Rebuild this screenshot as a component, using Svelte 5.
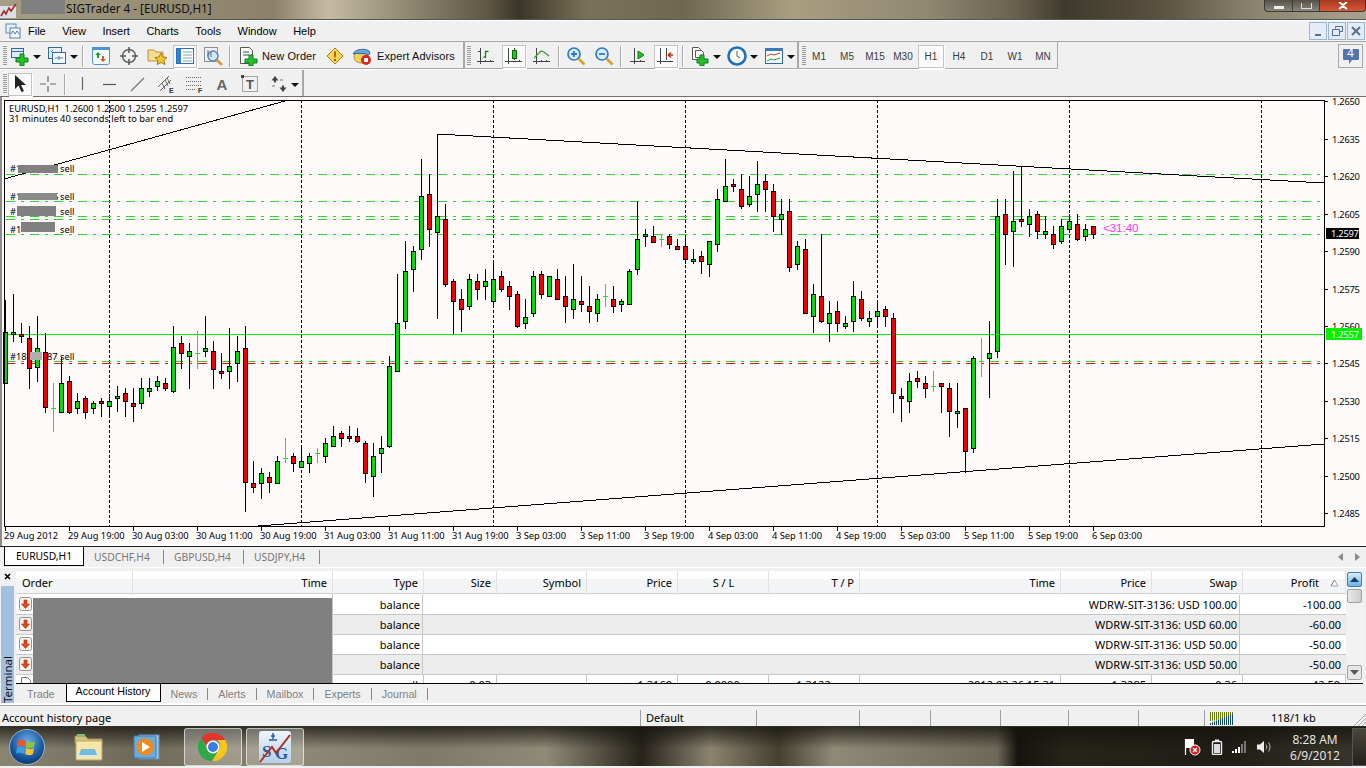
<script lang="ts">
  // [wick top, body top, body bottom, wick bottom, colour] in screen px; doji: [top, bottom, mid]
  const candles: any[] = [
    [300,332,383,383,'g'],[294,332,334,342,'g'],[323,334,336,343,'r'],[326,338,368,389,'r'],[316,348,367,382,'g'],
    [333,352,407,413,'r'],[383,432,408],[357,383,412,412,'g'],[376,381,412,414,'r'],[393,401,408,414,'g'],
    [396,398,412,419,'r'],[401,403,408,414,'g'],[398,401,403,417,'r'],[394,401,406,417,'g'],[386,396,398,412,'g'],
    [388,393,401,417,'r'],[388,403,406,422,'r'],[378,388,403,409,'g'],[378,388,391,397,'g'],[376,381,386,391,'g'],
    [378,383,388,391,'r'],[326,347,391,393,'g'],[336,343,353,369,'r'],[343,351,356,389,'g'],[331,369,353],
    [316,348,351,357,'g'],[341,351,369,389,'r'],[353,371,373,379,'r'],[328,366,371,389,'g'],[336,351,363,382,'g'],
    [326,348,482,512,'r'],[461,483,487,493,'r'],[468,473,483,499,'g'],[472,477,482,493,'r'],[456,461,483,483,'g'],
    [438,463,458],[453,456,463,472,'r'],[448,461,467,468,'g'],[453,456,463,473,'g'],[448,463,453],
    [438,443,456,463,'g'],[426,436,446,447,'g'],[431,433,438,447,'r'],[426,436,438,442,'r'],[428,436,441,443,'r'],
    [441,443,473,483,'r'],[443,456,476,497,'g'],[436,448,453,473,'g'],[356,366,446,448,'g'],[274,323,371,371,'g'],
    [241,271,321,329,'g'],[246,251,269,292,'g'],[159,196,249,260,'g'],[174,194,229,247,'r'],[134,216,232,319,'g'],
    [204,219,284,287,'r'],[279,281,301,334,'r'],[289,299,309,332,'r'],[274,279,306,310,'g'],[274,281,289,300,'r'],
    [269,281,286,300,'g'],[261,279,301,307,'g'],[271,276,289,292,'r'],[281,286,296,310,'r'],[291,294,326,328,'r'],
    [299,317,323,329,'g'],[271,276,313,317,'g'],[271,274,294,299,'r'],[276,276,296,296,'g'],[269,279,299,299,'r'],
    [276,296,306,323,'r'],[264,299,309,319,'g'],[276,301,304,312,'r'],[286,306,311,323,'r'],[294,299,313,322,'g'],
    [284,307,296],[286,299,306,313,'r'],[299,301,304,312,'g'],[269,271,304,304,'g'],[201,239,269,275,'g'],
    [229,234,236,247,'g'],[226,236,242,242,'r'],[234,247,239],[234,236,244,249,'r'],[239,246,249,250,'r'],
    [238,246,259,264,'r'],[249,259,261,264,'g'],[251,256,261,274,'r'],[241,241,264,277,'g'],[189,199,244,252,'g'],
    [159,186,201,201,'g'],[179,184,186,192,'r'],[174,189,206,209,'r'],[176,196,204,207,'g'],[161,184,194,212,'g'],
    [174,181,189,212,'r'],[184,191,216,232,'r'],[199,214,219,235,'g'],[199,211,267,272,'r'],[241,246,264,270,'g'],
    [239,249,313,313,'r'],[284,294,316,333,'g'],[234,296,321,323,'r'],[301,313,323,342,'g'],[301,311,323,332,'r'],
    [316,323,326,329,'g'],[281,296,321,332,'g'],[291,299,318,321,'r'],[311,318,321,327,'g'],[303,311,316,325,'g'],
    [306,309,316,327,'r'],[313,318,393,413,'r'],[388,396,398,422,'r'],[373,381,401,413,'g'],[371,378,381,388,'r'],
    [376,383,388,398,'r'],[371,392,386],[383,383,386,413,'r'],[383,388,411,437,'r'],[383,411,413,428,'g'],
    [408,408,451,473,'r'],[356,358,448,453,'g'],[338,377,361],[321,353,358,398,'g'],[199,216,351,358,'g'],
    [199,214,234,265,'r'],[171,221,231,267,'g'],[166,219,221,227,'r'],[209,216,224,237,'g'],[211,214,231,239,'r'],
    [216,231,234,239,'g'],[226,234,244,249,'r'],[219,226,241,244,'g'],[214,221,229,229,'g'],[214,224,239,241,'r'],
    [224,229,236,241,'g'],[226,226,234,239,'r']
  ];
  const vgrid = [109, 301, 493, 685, 877, 1069, 1261];
  const hlines = [[174,'#32cd32'],[201,'#32cd32'],[216,'#32cd32'],[219,'#32cd32'],[234,'#32cd32'],[361,'#32cd32'],[363,'#e01010']];
  const prices = [[101,'1.2650'],[139,'1.2635'],[176,'1.2620'],[214,'1.2605'],[251,'1.2590'],[289,'1.2575'],[326,'1.2560'],[363,'1.2545'],[401,'1.2530'],[438,'1.2515'],[476,'1.2500'],[513,'1.2485']];
  const times = ['29 Aug 2012','29 Aug 19:00','30 Aug 03:00','30 Aug 11:00','30 Aug 19:00','31 Aug 03:00','31 Aug 11:00','31 Aug 19:00','3 Sep 03:00','3 Sep 11:00','3 Sep 19:00','4 Sep 03:00','4 Sep 11:00','4 Sep 19:00','5 Sep 03:00','5 Sep 11:00','5 Sep 19:00','6 Sep 03:00'];
  const labels = [[10,172,'#1'],[10,200,'#10200075'],[10,215,'#1'],[10,233,'#1'],[10,360,'#18']];

  const menu = ['File','View','Insert','Charts','Tools','Window','Help'];
  const periods = ['M1','M5','M15','M30','H1','H4','D1','W1','MN'];
  const headers = [['Order','l'],['Time','r'],['Type','r'],['Size','r'],['Symbol','r'],['Price','r'],['S / L','c'],['T / P','r'],['Time','r'],['Price','r'],['Swap','r'],['Profit','p']];
  const balance = [['WDRW-SIT-3136: USD 100.00','-100.00'],['WDRW-SIT-3136: USD 60.00','-60.00'],['WDRW-SIT-3136: USD 50.00','-50.00'],['WDRW-SIT-3136: USD 50.00','-50.00']];
  const lastRow = ['', '', 'sell', '0.03', '', '1.3160', '0.0000', '1.3122', '2012.03.26 15:31', '1.3285', '0.36', '42.50'];
  const bottomTabs = ['News','Alerts','Mailbox','Experts','Journal'];
</script>

<div class="screen">
  <div class="title">
    <svg class="appicon" width="18" height="15" viewBox="0 0 18 15"><path d="M0 3h16v12H0z" fill="#d8dfe8"/><path d="M1 13l3-5 2 3 3-6 2 3 5-7" fill="none" stroke="#a8281c" stroke-width="1.6"/></svg>
    <div class="mask"></div>
    <span>SIGTrader 4 - [EURUSD,H1]</span>
    <div class="wctl">
      <div class="wbtn w1"><i class="wmin"></i></div>
      <div class="wbtn w2"><i class="wmax"></i></div>
      <div class="wbtn w3"><svg width="14" height="8" viewBox="0 0 14 8"><path d="M3 0l4 3 4-3M3 7l4-3 4 3" fill="none" stroke="#fff" stroke-width="2"/></svg></div>
    </div>
  </div>

  <div class="menu">
    <svg class="menuicon" width="16" height="16" viewBox="0 0 16 16"><rect x="1" y="1" width="10" height="9" fill="#e8f0fa" stroke="#5a8cc0"/><rect x="5" y="5" width="10" height="10" fill="#fff" stroke="#4a7cb4"/><path d="M6 11l2-3 2 3 2-3 2 3" fill="none" stroke="#3a78b8"/></svg>
    <div class="menuitems">
      {#each menu as m}<span>{m}</span>{/each}
    </div>
    <div class="mdi">
      <div class="mdibtn"><i class="g-min"></i></div>
      <div class="mdibtn"><svg width="11" height="11" viewBox="0 0 11 11"><path d="M3.500 2.500V.5h7v5h-3M.5 3.500h7v6h-7z" fill="none" stroke="#4f6d8c"/></svg></div>
      <div class="mdibtn"><svg width="10" height="10" viewBox="0 0 10 10"><path d="M1 1l8 8M9 1l-8 8" stroke="#5d7185" stroke-width="2"/></svg></div>
    </div>
  </div>

  <div class="tb t1">
    <div class="group g1">
      <i class="grip"></i>
      <div class="btn"><svg viewBox="0 0 20 20"><rect x="1.500" y="2.500" width="12" height="9" fill="#dfeaf7" stroke="#2f6aa8"/><path d="M1.500 5.500h12" stroke="#2f6aa8"/><path d="M10 8h4v4h4v4h-4v4h-4v-4H6v-4h4z" fill="#28c028" stroke="#0d7a18"/></svg></div>
      <i class="dd"></i>
      <div class="btn"><svg viewBox="0 0 20 20"><rect x="1.500" y="1.500" width="13" height="11" fill="#e4eefa" stroke="#2f6aa8"/><rect x="5.500" y="6.500" width="13" height="11" fill="#f6faff" stroke="#2f6aa8"/><path d="M4 6l2-2M8 12h8M12 10v4" stroke="#4a7cb4"/></svg></div>
      <i class="dd"></i>
      <i class="sep"></i>
      <div class="btn"><svg viewBox="0 0 20 20"><rect x="1.500" y="1.500" width="17" height="17" rx="2" fill="#f6fbff" stroke="#4f94d4"/><path d="M1 1h18v3H1z" fill="#4f94d4"/><path d="M7 6l3 3H8v3H6V9H4z" fill="#20a030"/><path d="M12 16l-3-3h2v-3h2v3h2z" fill="#e0552a"/></svg></div>
      <div class="btn"><svg viewBox="0 0 20 20"><circle cx="10" cy="10" r="6.500" fill="none" stroke="#666" stroke-width="1.500"/><path d="M10 1v6M10 13v6M1 10h6M13 10h6" stroke="#555" stroke-width="1.500"/></svg></div>
      <div class="btn"><svg viewBox="0 0 20 20"><path d="M1 4h6l2 2h7v9H1z" fill="#f6dc90" stroke="#b59536"/><path d="M14 7l2 4 4 .5-3 3 1 4-4-2-4 2 1-4-3-3 4-.5z" fill="#f2c430" stroke="#a07a18"/></svg></div>
      <div class="btn on"><svg viewBox="0 0 20 20"><rect x="1.500" y="2.500" width="17" height="15" fill="#fff" stroke="#2b70b8"/><rect x="2" y="3" width="4" height="14" fill="#2b84d8"/><path d="M8 6h9M8 9h9M8 12h9M8 15h9" stroke="#8aa2ba"/></svg></div>
      <div class="btn"><svg viewBox="0 0 20 20"><rect x="1.500" y="1.500" width="13" height="14" fill="#eef0f3" stroke="#8a8f98"/><circle cx="10" cy="10" r="5" fill="#d5e6f6" stroke="#5a86ad" stroke-width="1.500"/><path d="M14 14l5 5" stroke="#d89a2c" stroke-width="2.500"/><path d="M5 4v6M8 6v5" stroke="#5a6a7a"/></svg></div>
      <i class="sep"></i>
      <div class="btn wide order"><svg class="ico" viewBox="0 0 20 20"><path d="M2.500 1.500h9l3 3v13h-12z" fill="#fff" stroke="#555"/><path d="M5 6h6M5 9h6" stroke="#444"/><path d="M11 9h4v4h4v4h-4v3h-4v-3H7v-4h4z" fill="#28c028" stroke="#0d7a18"/></svg><span>New Order</span></div>
      <div class="btn"><svg viewBox="0 0 20 20"><path d="M10 2l8 8-8 8-8-8z" fill="#fbd655" stroke="#a88418" stroke-linejoin="round"/><path d="M9 5.500h2l-.3 6h-1.400z" fill="#a8560c"/><rect x="9" y="13" width="2" height="2" fill="#a8560c"/></svg></div>
      <div class="btn wide expert"><svg class="ico" viewBox="0 0 20 20"><ellipse cx="9" cy="11" rx="7" ry="6" fill="#f2d060" stroke="#b09020"/><path d="M1 8c2-5 12-6 16-3 1 1 1 3 0 4-5-2-11-2-16-1z" fill="#6fa8dc" stroke="#2c6aa0"/><circle cx="14" cy="14" r="5" fill="#d82820"/><rect x="12" y="12" width="4" height="4" fill="#fff"/></svg><span>Expert Advisors</span></div>
    </div>
    <div class="group g2">
      <i class="grip"></i>
      <div class="btn"><svg viewBox="0 0 20 20"><path d="M4.500 2v16M1 15.500h17M9.500 14v2M14.500 14v2M2 5.500h2" fill="none" stroke="#444"/><path d="M9.500 12V5.500h3M7.500 11h2" fill="none" stroke="#108a10" stroke-width="1.300"/></svg></div>
      <div class="btn on"><svg viewBox="0 0 20 20"><path d="M4.500 2v16M1 15.500h17M15.500 14v2" fill="none" stroke="#444"/><path d="M10.500 2v12" stroke="#1a5a1a"/><rect x="8.500" y="4.500" width="4" height="8" fill="#12d012" stroke="#0d6a0d"/></svg></div>
      <div class="btn"><svg viewBox="0 0 20 20"><path d="M4.500 2v16M1 15.500h17M9.500 14v2M14.500 14v2" fill="none" stroke="#444"/><path d="M2 12l7-7 3 1 5 4" fill="none" stroke="#3aa03a" stroke-width="1.300"/></svg></div>
      <i class="sep"></i>
      <div class="btn"><svg viewBox="0 0 20 20"><circle cx="8" cy="8" r="6" fill="#d8ebfb" stroke="#2d7cc4" stroke-width="1.700"/><path d="M5 8h6M8 5v6" stroke="#2d7cc4" stroke-width="1.800"/><path d="M12.500 12.500l6 6" stroke="#d8a030" stroke-width="2.600"/></svg></div>
      <div class="btn"><svg viewBox="0 0 20 20"><circle cx="8" cy="8" r="6" fill="#d8ebfb" stroke="#2d7cc4" stroke-width="1.700"/><path d="M5 8h6" stroke="#2d7cc4" stroke-width="1.800"/><path d="M12.500 12.500l6 6" stroke="#d8a030" stroke-width="2.600"/></svg></div>
      <i class="sep"></i>
      <div class="btn"><svg viewBox="0 0 20 20"><path d="M6.500 2v16M2 15.500h15M12.500 14v2" fill="none" stroke="#444"/><path d="M10 5v8l6-4z" fill="#1fc81f" stroke="#0d7a18"/></svg></div>
      <div class="btn on"><svg viewBox="0 0 20 20"><path d="M4.500 2v16M1 15.500h16M10.500 2v12" fill="none" stroke="#444"/><path d="M17 9h-5M12 9l3-2.500M12 9l3 2.500" fill="none" stroke="#c43010" stroke-width="1.600"/></svg></div>
      <i class="sep"></i>
      <div class="btn"><svg viewBox="0 0 20 20"><path d="M2.500 1.500h6l2 2v10h-8z" fill="#fff" stroke="#555"/><path d="M5.500 4.500h6l2 2v5h-8z" fill="#fff" stroke="#555"/><path d="M10 9h4v4h4v4h-4v3h-4v-3H7v-4h3z" fill="#28c028" stroke="#0d7a18"/></svg></div>
      <i class="dd"></i>
      <div class="btn"><svg viewBox="0 0 20 20"><circle cx="10" cy="10" r="8.500" fill="#fff" stroke="#1f6fc0" stroke-width="2.600"/><path d="M10 5v5l3 2" fill="none" stroke="#777" stroke-width="1.200"/></svg></div>
      <i class="dd"></i>
      <div class="btn"><svg viewBox="0 0 20 20"><rect x="1.500" y="2.500" width="17" height="15" fill="#f8fbff" stroke="#2f6aa8"/><rect x="1" y="2" width="18" height="3" fill="#3c78b8"/><path d="M3 10l4-2 3 1 6-2" fill="none" stroke="#c04020"/><path d="M3 15l4-2 3 1 6-2" fill="none" stroke="#2c9a2c"/></svg></div>
      <i class="dd"></i>
    </div>
    <div class="group g3">
      <i class="grip"></i>
      {#each periods as p}
        <div class="period" class:on={p === 'H1'}>{p}</div>
      {/each}
    </div>
    <div class="msg">
      <svg width="18" height="17" viewBox="0 0 18 17"><path d="M2 1h14a1 1 0 011 1v9a1 1 0 01-1 1h-6l-3 4v-4H2a1 1 0 01-1-1V2a1 1 0 011-1z" fill="#4f74b0"/></svg>
      <span>4</span>
    </div>
  </div>

  <div class="tb t2">
    <div class="group g4">
      <i class="grip"></i>
      <div class="btn on"><svg viewBox="0 0 20 20"><path d="M5 1v14l3.500-3.500 3 6.500 2.500-1-3-6h5z" fill="#222"/></svg></div>
      <div class="btn"><svg viewBox="0 0 20 20"><path d="M10 2v6M10 12v6M2 10h6M12 10h6" stroke="#666" stroke-width="1.200"/></svg></div>
      <i class="sep"></i>
      <div class="btn"><svg viewBox="0 0 20 20"><path d="M10.500 3v13" stroke="#666" stroke-width="1.200"/></svg></div>
      <div class="btn"><svg viewBox="0 0 20 20"><path d="M3 10.500h13" stroke="#555" stroke-width="1.200"/></svg></div>
      <div class="btn"><svg viewBox="0 0 20 20"><path d="M3 17L16 4" stroke="#777" stroke-width="1.200"/></svg></div>
      <div class="btn"><svg viewBox="0 0 20 20"><path d="M2 13L13 2M4 17L15 6M6 9l3 6M9 6l3 6M11 4l3 6" stroke="#666" fill="none"/><text x="13" y="19" class="ictext">E</text></svg></div>
      <div class="btn"><svg viewBox="0 0 20 20"><path d="M2 3.500h15M2 7.500h15M2 11.500h15M2 15.500h10" stroke="#666" stroke-dasharray="1 1"/><text x="14" y="19" class="ictext">F</text></svg></div>
      <div class="btn"><span class="a">A</span></div>
      <div class="btn"><svg viewBox="0 0 20 20"><rect x="2.500" y="2.500" width="15" height="15" fill="none" stroke="#555" stroke-dasharray="1 1"/><rect x="1" y="1" width="3" height="3" fill="#444"/><text x="10" y="15" class="ictext2">T</text></svg></div>
      <div class="btn"><svg viewBox="0 0 20 20"><path d="M7 2l3.500 4.500H8v2H6v-2H3.500zM15 18l-3.500-4.500H14v-2h2v2h2.500z" fill="#444"/><path d="M4 12h3M12 6h3" stroke="#777"/></svg></div>
      <i class="dd"></i>
    </div>
  </div>

  <svg class="chart" width="1366" height="449" viewBox="0 97 1366 449">
    <rect x="0" y="97" width="1366" height="449" fill="#fffafa"/>
    <rect x="0" y="97" width="2" height="449" fill="#8c8c8c"/>
    {#each vgrid as x}
      <path d="M{x + 0.5} 100V526" stroke="#000" stroke-dasharray="3 2"/>
    {/each}
    {#each hlines as h}
      <path d="M6 {h[0] + 0.5}H1324" stroke={h[1]} stroke-dasharray="9 6 3 6"/>
    {/each}
    <rect x="4" y="334" width="1320" height="1" fill="#00f000"/>
    {#each candles as c, i}
      {@const x = 5 + 8 * i}
      {#if c.length === 3}
        <rect {x} y={c[0]} width="1" height={c[1] - c[0]} fill="#22e022"/>
        <rect x={x - 2} y={c[2]} width="5" height="1" fill="#22e022"/>
      {:else}
        <rect {x} y={c[0]} width="1" height={c[3] - c[0]} fill="#000"/>
        <rect x={x - 1.500} y={c[1] + 0.5} width="4" height={c[2] - c[1]} fill={c[4] === 'g' ? '#00e000' : '#f00000'} stroke="#000"/>
      {/if}
    {/each}
    <path d="M4 179L285 101M437 134L1324 183M258 526L1324 444" stroke="#000" fill="none"/>
    <rect x="4" y="100" width="1320" height="1" fill="#000"/>
    <rect x="4" y="100" width="1" height="427" fill="#000"/>
    <rect x="4" y="526" width="1320" height="1" fill="#000"/>
    <rect x="1324" y="100" width="1" height="427" fill="#000"/>
    {#each prices as p}
      <rect x="1324" y={p[0]} width="4" height="1" fill="#000"/>
      <text x="1332" y={+p[0] + 4} class="tx pr">{p[1]}</text>
    {/each}
    {#each times as t, i}
      <rect x={5 + 64 * i} y="527" width="1" height="4" fill="#000"/>
      <text x={4 + 64 * i} y="539" class="tx">{t}</text>
    {/each}
    <text x="9" y="112" class="tx">EURUSD,H1  1.2600 1.2600 1.2595 1.2597</text>
    <text x="9" y="122" class="tx">31 minutes 40 seconds left to bar end</text>
    {#each labels as l}
      <text x={l[0]} y={l[1]} class="tx">{l[2]}</text>
    {/each}
    <text x="60" y="172" class="tx">sell</text>
    <text x="60" y="200" class="tx">sell</text>
    <text x="60" y="215" class="tx">sell</text>
    <text x="60" y="233" class="tx">sell</text>
    <text x="60" y="360" class="tx">sell</text>
    <text x="47" y="360" class="tx">87</text>
    <rect x="18" y="165" width="40" height="8" fill="#808080"/>
    <rect x="18" y="193" width="39" height="7" fill="#8a8a8a"/>
    <rect x="17" y="206" width="39" height="10" fill="#808080"/>
    <rect x="21" y="222" width="34" height="10" fill="#808080"/>
    <rect x="30" y="352" width="12" height="8" fill="#b0b0b0"/>
    <rect x="81" y="166" width="11" height="1" fill="#fff"/>
    <text x="1103" y="232" class="timer">&lt;31:40</text>
    <rect x="1326" y="228" width="33" height="11" fill="#000"/>
    <text x="1331" y="237" class="tx pr tagw">1.2597</text>
    <rect x="1326" y="328" width="36" height="12" fill="#00f000"/>
    <text x="1331" y="338" class="tx pr tagw">1.2557</text>
  </svg>

  <div class="tabs">
    <div class="tab active">EURUSD,H1</div>
    <div class="tab t80">USDCHF,H4</div>
    <div class="tab t80">GBPUSD,H4</div>
    <div class="tab t76">USDJPY,H4</div>
    <div class="arrows">
      <svg width="5" height="8" viewBox="0 0 5 8"><path d="M5 0v8L0 4z" fill="#8a8a8a"/></svg>
      <svg width="5" height="8" viewBox="0 0 5 8"><path d="M0 0v8l5-4z" fill="#8a8a8a"/></svg>
    </div>
  </div>

  <div class="terminal">
    <div class="rail">
      <svg width="7" height="7" viewBox="0 0 7 7"><path d="M1 1l5 5M6 1L1 6" stroke="#000" stroke-width="1.600"/></svg>
      <div class="railbar"><span>Terminal</span></div>
    </div>
    <div class="panel">
      <div class="tablewrap">
        <div class="table">
          <div class="thead">
            {#each headers as h}
              <div class="th {h[1]}">
                {h[0]}
                {#if h[1] === 'p'}<svg class="sort" width="9" height="8" viewBox="0 0 9 8"><path d="M4.500 1L8 7H1" fill="none" stroke="#aaa"/><path d="M4.500 1L1 7" stroke="#777"/></svg>{/if}
              </div>
            {/each}
          </div>
          <div class="tbody">
            {#each balance as b, i}
              <div class="tr" class:alt={i % 2 === 1}>
                <div class="td icon">
                  <svg width="14" height="14" viewBox="0 0 14 14"><rect x=".5" y=".5" width="12" height="13" rx="2" fill="#f7f3ef" stroke="#9a8f88"/><path d="M5 3h3v4h2.500L6.500 11.500 2.500 7H5z" fill="#e2481c" stroke="#a82c0c" stroke-width=".6"/></svg>
                </div>
                <div class="td"></div>
                <div class="td num">balance</div>
                <div class="td num">{b[0]}</div>
                <div class="td num last">{b[1]}</div>
              </div>
            {/each}
            <div class="tr full">
              <div class="td icon"><svg width="14" height="14" viewBox="0 0 14 14"><path d="M2.500 .5h6l3 3v10h-9z" fill="#fff" stroke="#777"/></svg></div>
              {#each lastRow.slice(1) as v, i}
                <div class="td num" class:ctr={i === 5 || i === 6}>{v}</div>
              {/each}
            </div>
          </div>
          <div class="redacted"></div>
        </div>
        <div class="scroll">
          <div class="sbtn up"><svg width="9" height="5" viewBox="0 0 9 5"><path d="M0 5l4.500-5L9 5z" fill="#123c66"/></svg></div>
          <div class="thumb"></div>
          <div class="sbtn down"><svg width="9" height="5" viewBox="0 0 9 5"><path d="M0 0l4.500 5L9 0z" fill="#555"/></svg></div>
        </div>
      </div>
      <div class="btabs">
        <div class="btab first">Trade</div>
        <div class="btab active">Account History</div>
        {#each bottomTabs as t}
          <div class="btab">{t}</div>
        {/each}
      </div>
    </div>
  </div>

  <div class="status">
    <div class="scell s0">Account history page</div>
    <div class="scell s1">Default</div>
    <div class="scell s2"></div>
    <div class="scell s3"></div>
    <div class="scell s4"></div>
    <div class="scell s5"></div>
    <div class="scell s6"></div>
    <div class="scell s7"></div>
    <div class="scell s8">
      <svg width="24" height="13" viewBox="0 0 24 13">
        {#each Array(12) as _, i}
          <rect x={i * 2} y="0" width="1" height={9 - i * 0.3} fill="#6a7a10"/>
          <rect x={i * 2} y={11 - i * 0.8} width="1" height={2 + i * 0.8} fill="#0f4a68"/>
        {/each}
      </svg>
      <span>118/1 kb</span>
    </div>
    <svg class="resize" width="13" height="13" viewBox="0 0 13 13"><path d="M13 1L1 13M13 5l-8 8M13 9l-4 4" stroke="#aaa"/></svg>
  </div>

  <div class="taskbar">
    <div class="orb">
      <svg width="36" height="36" viewBox="0 0 36 36">
        <defs><radialGradient id="orbg" cx=".5" cy=".35" r=".7"><stop offset="0" stop-color="#6fb0e8"/><stop offset=".6" stop-color="#1c5ea8"/><stop offset="1" stop-color="#0a2c58"/></radialGradient></defs>
        <circle cx="18" cy="18" r="17.500" fill="url(#orbg)" stroke="#9fb4c4"/>
        <path d="M9 12c3-2 5-1 8 0l-1 6c-3-1-5-2-8 0z" fill="#e8582c"/>
        <path d="M18 12c3 1 5 2 8 0l-1 6c-3 2-5 1-8 0z" fill="#8cc63e"/>
        <path d="M8 19c3-2 5-1 8 0l-1 6c-3-1-5-2-8 0z" fill="#3c9de0"/>
        <path d="M17 19c3 1 5 2 8 0l-1 6c-3 2-5 1-8 0z" fill="#f4c22c"/>
      </svg>
    </div>
    <div class="tskicon i1">
      <svg width="32" height="30" viewBox="0 0 32 30"><path d="M2 4h10l3 3h14v4H2z" fill="#d8c07a" stroke="#a89050"/><path d="M4 2h8v3H4z" fill="#7ac070"/><rect x="3" y="9" width="26" height="19" rx="1" fill="#f6e6a8" stroke="#b8a468"/><path d="M5 20h20v5H5z" fill="#d8e8f0"/><path d="M8 17h14l2 6H6z" fill="#58b0e0" opacity=".8"/></svg>
    </div>
    <div class="tskicon i2">
      <svg width="28" height="28" viewBox="0 0 28 28"><rect x="6" y="2" width="20" height="24" fill="#9cc4e4" stroke="#5c90bc"/><rect x="1" y="3" width="22" height="22" rx="1" fill="#6caad8" stroke="#3f7fb4"/><circle cx="12" cy="14" r="8.500" fill="#f08a1c"/><path d="M9 9l8 5-8 5z" fill="#fff"/></svg>
    </div>
    <div class="tskbtn b1">
      <svg width="30" height="30" viewBox="0 0 30 30"><path d="M15 1a14 14 0 0112.100 7H15a7 7 0 00-6.700 5L3.200 6A14 14 0 0115 1z" fill="#e0362c"/><path d="M27.100 8A14 14 0 0114 29l6-10a7 7 0 00-.5-11z" fill="#f7c818"/><path d="M14 29A14 14 0 013.200 6l6 10.500A7 7 0 0020 19z" fill="#2fa84a"/><circle cx="15" cy="15" r="6.500" fill="#fff"/><circle cx="15" cy="15" r="5" fill="#3b7de0"/></svg>
    </div>
    <div class="tskbtn b2">
      <div class="sig">
        <svg width="32" height="32" viewBox="0 0 32 32"><defs><linearGradient id="sigb" x1="0" y1="0" x2="0" y2="1"><stop offset="0" stop-color="#eef4fb"/><stop offset="1" stop-color="#b8cfe8"/></linearGradient></defs><rect width="32" height="32" rx="3" fill="url(#sigb)"/><path d="M14 2v6M12 5h4M10 9h8" stroke="#2a5aa0" stroke-width="1.500"/><text x="3" y="26" class="sigt">S</text><text x="16" y="28" class="sigt">G</text><path d="M1 31L13 16l4 6L31 4" fill="none" stroke="#a83428" stroke-width="2"/></svg>
      </div>
    </div>
    <div class="tray">
      <svg width="18" height="18" viewBox="0 0 18 18"><path d="M1.500 1v16" stroke="#fff" stroke-width="1.200"/><path d="M2 1h8v9H2z" fill="#fff"/><circle cx="11" cy="12" r="5" fill="#d81c1c" stroke="#fff"/><path d="M9 10l4 4M13 10l-4 4" stroke="#fff" stroke-width="1.300"/></svg>
      <svg width="12" height="16" viewBox="0 0 12 16"><rect x="1.500" y="2.500" width="9" height="13" rx="1" fill="none" stroke="#eee" stroke-width="1.400"/><rect x="4" y=".5" width="4" height="2" fill="#eee"/><rect x="3" y="5" width="6" height="9" fill="#ddd"/></svg>
      <svg width="16" height="12" viewBox="0 0 16 12"><rect x="0" y="10" width="2" height="2" fill="#fff"/><rect x="3" y="8" width="2" height="4" fill="#fff"/><rect x="6" y="6" width="2" height="6" fill="#fff"/><rect x="9" y="3" width="2" height="9" fill="#777"/><rect x="12" y="0" width="2" height="12" fill="#777"/></svg>
      <svg width="16" height="14" viewBox="0 0 16 14"><path d="M0 4.500h3L7 1v12L3 9.500H0z" fill="#eee"/><path d="M9 4.500c1 1.500 1 3.500 0 5M11.500 2.500c2 2.500 2 6.500 0 9" fill="none" stroke="#bbb"/></svg>
    </div>
    <div class="clock"><div>8:28 AM</div><div>6/9/2012</div></div>
    <div class="desk"></div>
  </div>
</div>

<style>
  :global(body) {
    margin: 0;
    background: #f0f0f0;
  }
  .screen {
    width: 1366px;
    height: 768px;
    overflow: hidden;
    font-family: "Noto Sans", "Open Sans", sans-serif;
    font-size: 11px;
    color: #000;
    display: flex;
    flex-direction: column;
  }
  i { display: block; }

  /* title bar */
  .title {
    height: 21px;
    box-sizing: border-box;
    display: flex;
    align-items: flex-start;
    background:
      linear-gradient(90deg, #a59d84 0, #8a8168 20%, #c4bba2 24%, #8f8770 30%, #5b543f 36%, #3a3527 38%, #7a7258 43%, #6f6850 50%, #a89f82 58%, #8f8770 68%, #6b6450 74%, #3f3a2c 78%, #59523f 85%, #8c8570 92%, #a8a290 100%);
    border-bottom: 1px solid #fff;
    box-shadow: inset 0 -1px 0 #555;
  }
  .appicon { margin-top: 3px; flex: none; }
  .mask { width: 44px; height: 14px; margin-left: 3px; background: #808080; flex: none; }
  .title span {
    margin-left: 1px;
    font-size: 11.700px;
    line-height: 16px;
    color: #101010;
  }
  .wctl { margin-left: auto; display: flex; height: 12px; }
  .wbtn {
    box-sizing: border-box;
    height: 12px;
    border: 1px solid #3c3a34;
    border-top: 0;
    display: flex;
    align-items: center;
    justify-content: center;
    background: linear-gradient(#55524a, #8a867a);
  }
  .w1 { width: 29px; border-radius: 0 0 0 4px; }
  .w2 { width: 27px; border-left: 0; }
  .w3 { width: 46px; border-left: 0; background: linear-gradient(#a83a20, #d85638); border-radius: 0 0 4px 0; }
  .wmin { width: 10px; height: 3px; background: #eee; margin-top: 3px; }
  .wmax { width: 9px; height: 5px; border: 1px solid #ddd; border-top: 0; }

  /* menu */
  .menu {
    height: 21px;
    box-sizing: border-box;
    display: flex;
    align-items: center;
    background: #f0f0f0;
    border-bottom: 1px solid #a8a8a8;
    position: relative;
  }
  .menuicon { margin-left: 5px; flex: none; }
  .menuitems { display: flex; gap: 16.500px; margin-left: 7px; font: 11px "Liberation Sans", sans-serif; }
  .mdi { margin-left: auto; display: flex; gap: 1px; margin-right: 1px; }
  .mdibtn {
    box-sizing: border-box;
    width: 18px;
    height: 18px;
    border: 1px solid #9db6d0;
    background: #e4edf7;
    display: flex;
    align-items: center;
    justify-content: center;
  }
  .g-min { width: 6px; height: 2px; background: #5d7185; margin-top: 7px; }

  /* toolbars */
  .tb { display: flex; background: #f0f0f0; box-sizing: border-box; }
  .t1 { height: 28px; }
  .t2 { height: 27px; border-bottom: 1px solid #707070; }
  .group {
    display: flex;
    align-items: center;
    gap: 4px;
    box-sizing: border-box;
    height: 27px;
    padding-top: 2px;
    border-bottom: 1px solid #a8a8a8;
    box-shadow: 0 1px 0 #fff;
  }
  .g1 { width: 463px; padding-left: 3px; gap: 4px; }
  .g1 .sep { margin-right: 1px; }
  .g1 .grip { margin-right: -3px; }
  .g2 { width: 334px; border-left: 2px solid #a8a8a8; padding-left: 2px; }
  .g2 .grip { margin-right: -1px; }
  .g3 { width: 261px; border-left: 2px solid #a8a8a8; border-right: 1px solid #a8a8a8; gap: 0; padding-left: 3px; }
  .g3 .grip { margin-right: -1px; }
  .g4 { width: 304px; height: 26px; border-right: 2px solid #a8a8a8; border-bottom: 0; box-shadow: none; padding-left: 3px; }
  .g4 .grip { margin-right: -3px; }
  .grip {
    width: 4px;
    height: 20px;
    background: repeating-linear-gradient(#9a9a9a 0 1px, #f0f0f0 1px 2px);
    flex: none;
  }
  .sep { width: 2px; height: 21px; background: #a8a8a8; border-right: 1px solid #fff; box-sizing: border-box; flex: none; }
  .btn {
    box-sizing: border-box;
    width: 24px;
    height: 23px;
    display: flex;
    align-items: center;
    justify-content: center;
    flex: none;
  }
  .btn svg { width: 20px; height: 20px; flex: none; }
  .on {
    background-color: #fafafa;
    background-image: radial-gradient(#e6e6e6 0.5px, transparent 0.6px);
    background-size: 2px 2px;
    border: 1px solid #c4c4c4;
    box-shadow: 1px 1px 0 #fff;
  }
  .dd {
    width: 9px;
    height: 23px;
    margin-left: -4px;
    flex: none;
    position: relative;
  }
  .dd::after {
    content: "";
    position: absolute;
    left: 1px;
    top: 10px;
    border-left: 4px solid transparent;
    border-right: 4px solid transparent;
    border-top: 4px solid #111;
  }
  .wide { justify-content: flex-start; font: 11px "Liberation Sans", sans-serif; letter-spacing: .1px; color: #101010; white-space: nowrap; }
  .order { width: 83px; padding-left: 2px; gap: 4px; }
  .expert { width: 107px; padding-left: 1px; gap: 5px; }
  .a { font-size: 15px; font-weight: 700; color: #666; font-family: "Liberation Sans", sans-serif; }
  .ictext { font: 700 7px "Liberation Sans", sans-serif; fill: #333; }
  .ictext2 { font: 700 13px "Liberation Sans", sans-serif; fill: #555; text-anchor: middle; }
  .period {
    box-sizing: border-box;
    width: 28px;
    height: 23px;
    display: flex;
    align-items: center;
    justify-content: center;
    flex: none;
    color: #3c3c3c;
    font: 10px "Liberation Sans", sans-serif;
  }
  .period.on { margin: 0 1px; width: 26px; }
  .msg {
    box-sizing: border-box;
    margin-left: auto;
    margin-right: 3px;
    margin-top: 2px;
    width: 25px;
    height: 24px;
    border: 1px solid #a8a8a8;
    position: relative;
    display: flex;
    align-items: center;
    justify-content: center;
  }
  .msg span {
    position: absolute;
    left: 8px;
    top: 0;
    font-size: 12px;
    line-height: 16px;
    color: #fff;
  }

  /* chart */
  .chart { display: block; flex: none; shape-rendering: crispEdges; }
  .tx { font: 9.300px "Noto Sans", sans-serif; fill: #000; white-space: pre; }
  .pr { letter-spacing: -.25px; }
  .tagw { fill: #fff; }
  .timer { font: 11.500px "Liberation Sans", sans-serif; fill: #ff33ee; }

  /* chart tabs */
  .tabs {
    height: 21px;
    box-sizing: border-box;
    border-top: 1px solid #222;
    background: #f0f0f0;
    display: flex;
    color: #777;
    font-size: 10.300px;
  }
  .tab {
    border-right: 1px solid #888;
    box-sizing: border-box;
    height: 14px;
    margin-top: 3px;
    line-height: 14px;
    white-space: nowrap;
    padding-left: 10px;
  }
  .t80 { width: 80px; }
  .t76 { width: 76px; }
  .tab.active {
    margin: 0 0 0 4px;
    height: 19px;
    line-height: 18px;
    width: 80px;
    padding: 0;
    text-align: center;
    color: #000;
    background: #fff;
    border: 1px solid #000;
    border-top: 0;
  }
  .arrows { margin-left: auto; display: flex; gap: 12px; align-items: center; margin-right: 6px; padding-bottom: 1px; }

  /* terminal */
  .terminal {
    height: 138px;
    box-sizing: border-box;
    padding-top: 3px;
    display: flex;
    background: #f0f0f0;
    border-top: 1px solid #fff;
    border-bottom: 2px solid #fff;
    flex: none;
  }
  .rail { width: 16px; flex: none; display: flex; flex-direction: column; align-items: center; padding-right: 2px; box-sizing: border-box; padding-left: 1px; }
  .rail svg { margin: 2px 0 6px; flex: none; }
  .railbar {
    width: 13px;
    height: 120px;
    background: #a3c0e0;
    display: flex;
    align-items: flex-end;
    justify-content: center;
    overflow: hidden;
  }
  .railbar span {
    writing-mode: vertical-rl;
    transform: rotate(180deg);
    font-size: 11.500px;
    color: #111;
    line-height: 13px;
  }
  .panel { flex: 1; min-width: 0; display: flex; flex-direction: column; }
  .tablewrap { height: 112px; display: flex; border-bottom: 1px solid #000; margin-right: 3px; background: #fff; }
  .table { width: 1330px; position: relative; flex: none; overflow: hidden; }
  .thead, .tr {
    display: grid;
    grid-template-columns: 117px 200px 91px 73px 90px 91px 91px 91px 201px 91px 91px 103px;
  }
  .thead {
    height: 23px;
    box-sizing: border-box;
    border-bottom: 1px solid #cfcfcf;
    background: linear-gradient(#fff 0 35%, #f3f4f6 35%);
    margin-bottom: 1px;
  }
  .th {
    padding: 0 5px 0 6px;
    line-height: 24px;
    border-right: 1px solid #e2e2e2;
    font-size: 11px;
    position: relative;
  }
  .th.r { text-align: right; }
  .th.l { text-align: left; }
  .th.c { text-align: center; }
  .th.p { text-align: right; padding-right: 26px; }
  .sort { position: absolute; right: 6px; top: 8px; }
  .tbody { height: 88px; overflow: hidden; }
  .tr {
    height: 20px;
    box-sizing: border-box;
    border-bottom: 1px solid #c8c8c8;
    grid-template-columns: 16px 301px 90px 817px 106px;
    background: #fff;
  }
  .tr.alt { background: #ececec; }
  .tr.full { grid-template-columns: 117px 200px 91px 73px 90px 91px 91px 91px 201px 91px 91px 103px; }
  .td { line-height: 19px; padding: 0 2px 0 4px; border-right: 1px solid #c8c8c8; white-space: nowrap; overflow: hidden; font-size: 11px; }
  .td.num { text-align: right; }
  .td.ctr { text-align: center; }
  .td.icon { padding: 2px 0 0 3px; border-right: 0; overflow: hidden; }
  .full .td.num { padding-right: 5px; }
  .last { border-right: 0; padding-right: 5px; }
  .redacted {
    position: absolute;
    left: 17px;
    top: 27px;
    width: 299px;
    bottom: 0;
    background: #808080;
  }
  .scroll { flex: 1; background: #f2f2f2; position: relative; padding: 1px 1px; display: flex; flex-direction: column; }
  .sbtn {
    height: 15px;
    box-sizing: border-box;
    border: 1px solid #9aa4ae;
    display: flex;
    align-items: center;
    justify-content: center;
    flex: none;
    border-radius: 2px;
    background: #e6e6e6;
  }
  .sbtn.up { background: linear-gradient(#d8ecfa, #6fb0e4); border-color: #3c7fb1; }
  .thumb { height: 14px; margin-top: 2px; border: 1px solid #9aa4ae; background: linear-gradient(90deg, #e8e8e8, #ccc); border-radius: 2px; flex: none; box-sizing: border-box; }
  .down { margin-top: auto; margin-bottom: 2px; }
  .btabs { height: 18px; display: flex; color: #808080; font: 10.700px "Liberation Sans", sans-serif; }
  .btab {
    padding: 0 10px;
    border-right: 1px solid #888;
    height: 12px;
    margin-top: 4px;
    line-height: 12px;
    white-space: nowrap;
  }
  .btab.first { border-right: 0; padding: 0 11px 0 11px; }
  .btab.active {
    margin-top: 0;
    height: 18px;
    line-height: 15px;
    width: 95px;
    box-sizing: border-box;
    padding: 0;
    text-align: center;
    color: #000;
    background: #fff;
    border: 1px solid #000;
    border-top: 0;
  }

  /* status bar */
  .status {
    height: 21px;
    box-sizing: border-box;
    flex: none;
    display: flex;
    align-items: stretch;
    background: #f0f0f0;
    border-top: 1px solid #a8a8a8;
    position: relative;
    font-size: 11px;
    padding-top: 4px;
  }
  .scell { box-sizing: border-box; border-left: 1px solid #a0a0a0; padding-left: 5px; line-height: 16px; flex: none; height: 16px; }
  .s0 { width: 640px; border-left: 0; padding-left: 2px; }
  .s1 { width: 116px; }
  .s2 { width: 103px; }
  .s3 { width: 71px; }
  .s4 { width: 70px; }
  .s5 { width: 68px; }
  .s6 { width: 70px; }
  .s7 { width: 66px; }
  .s8 { display: flex; align-items: center; gap: 37px; width: 140px; }
  .resize { position: absolute; right: 0; bottom: 0; }

  /* taskbar */
  .taskbar {
    flex: none;
    height: 40px;
    display: flex;
    align-items: center;
    position: relative;
    border-top: 1px solid #33302a;
    box-sizing: border-box;
    background:
      linear-gradient(rgba(20,18,14,.75) 0, rgba(20,18,14,.35) 30%, rgba(20,18,14,0) 55%),
      linear-gradient(90deg, #8a8573 0, #6e6958 10%, #8e8976 22%, #7f7a68 31%, #8f8a76 40%, #26231c 47%, #8a846f 52%, #45402f 57%, #8f8a76 61%, #6d6858 73%, #16140f 74.500%, #262319 78%, #201d17 90%, #3a372e 100%);
    color: #e8e8e8;
  }
  .orb { margin-left: 9px; margin-top: 1px; width: 36px; height: 36px; flex: none; }
  .tskicon { flex: none; display: flex; align-items: center; justify-content: center; }
  .i1 { margin-left: 28px; width: 32px; }
  .i2 { margin-left: 28px; width: 28px; }
  .tskbtn {
    box-sizing: border-box;
    flex: none;
    width: 58px;
    height: 38px;
    margin-top: 1px;
    border: 1px solid rgba(255,255,255,.6);
    border-radius: 3px;
    background: linear-gradient(rgba(255,255,255,.3), rgba(255,255,255,.22));
    display: flex;
    align-items: center;
    justify-content: center;
  }
  .b1 { margin-left: 23px; }
  .b2 { margin-left: 4px; }
  .sig { width: 32px; height: 32px; }
  .sigt { font: 700 17px "Liberation Serif", serif; fill: #2a5aa0; }
  .tray { margin-left: auto; display: flex; align-items: center; gap: 9px; margin-right: 12px; }
  .clock { width: 60px; text-align: center; font-size: 12px; line-height: 16px; padding-top: 2px; font-family: "Open Sans", sans-serif; color: #ececec; margin-right: 7px; }
  .desk { width: 14px; height: 38px; box-sizing: border-box; border: 1px solid #555; border-right: 0; background: linear-gradient(#4a463c, #23211b); }
</style>
